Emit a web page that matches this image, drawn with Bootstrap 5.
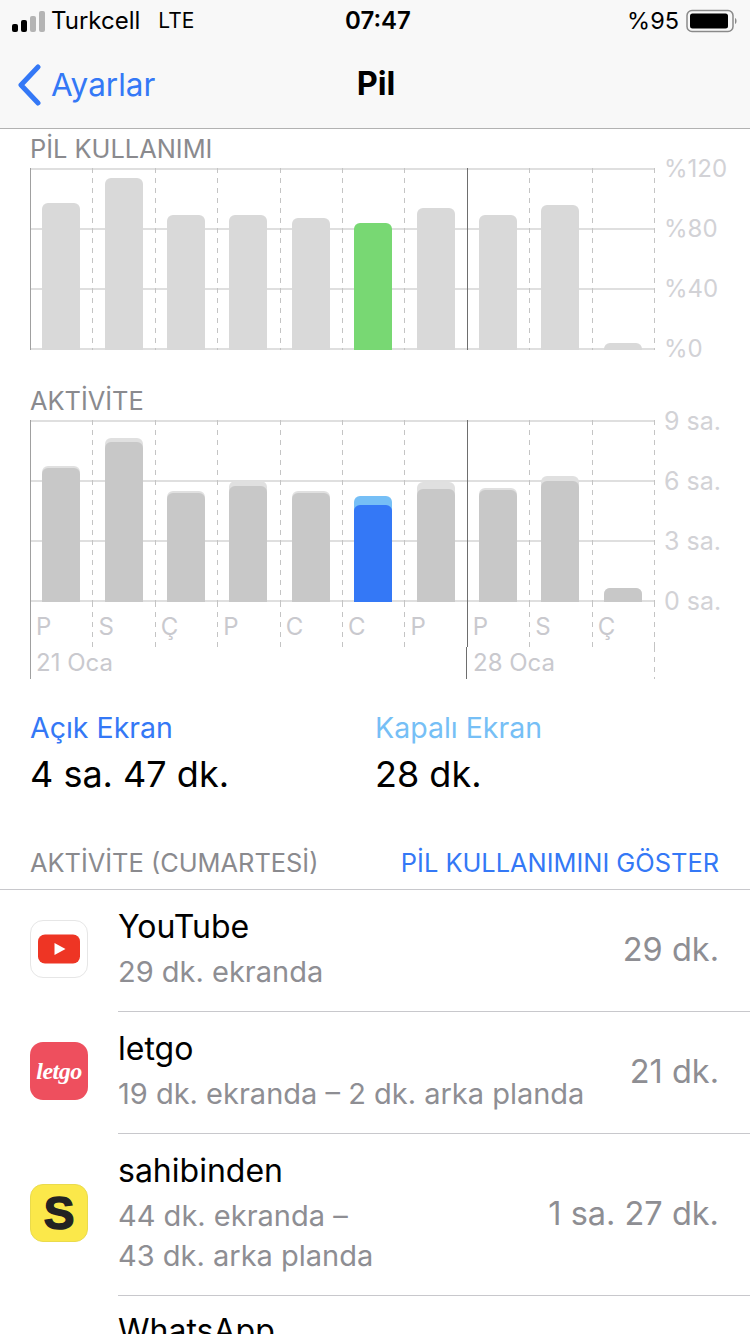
<!DOCTYPE html>
<html lang="tr">
<head>
    <meta charset="UTF-8">
    <meta name="viewport" content="width=device-width, initial-scale=1.0">
    <title>Pil</title>
    <link href="https://cdn.jsdelivr.net/npm/bootstrap@5.3.0/dist/css/bootstrap.min.css" rel="stylesheet">
    <style>
        html, body { height: 1334px; overflow: hidden; background: #fff; }
        body { font-family: Inter, "Liberation Sans", sans-serif; color: #000; }
        .screen { width: 750px; height: 1334px; overflow: hidden; }

        .top-area { height: 129px; background: #f8f8f8; border-bottom: 1px solid #b2b2b2; }
        .status-row { height: 42px; padding: 0 12px; font-size: 24px; }
        .signal { gap: 3px; height: 22px; margin-right: 6px; }
        .signal span { width: 6px; border-radius: 2px; background: #b4b4b4; }
        .signal .on { background: #000; }
        .status-net { font-size: 21px; margin-left: 18px; }
        .status-time { left: 0; right: 0; top: 0; line-height: 42px; font-weight: 600; padding-left: 6px; }
        .status-pct { font-size: 23.500px; margin-right: 7px; }
        .title-row { height: 86px; }
        .back-link { color: #3478f6; left: 17px; top: 20px; gap: 10px; line-height: 46px; font-size: 31.500px; }
        .page-title { font-weight: 700; font-size: 32.500px; padding-left: 2px; padding-bottom: 1px; }

        .section-label { font-size: 25.400px; color: #8a8a8e; padding: 5px 0 4px 30px; line-height: 30px; }
        .section-label.second { margin-top: 31px; }
        .chart-wrap { padding-left: 30px; }
        .plot { width: 625px; height: 182px; background-image: repeating-linear-gradient(to bottom, #dfdfdf 0, #dfdfdf 2px, transparent 2px, transparent 60px); border-left: 1px solid #a0a0a0; }
        .day-col { flex: 1 1 0; padding-right: 1px; background: repeating-linear-gradient(to bottom, #c4c4c4 0, #c4c4c4 5px, transparent 5px, transparent 10px) right top / 1px 100% no-repeat; }
        .day-col.week-end { background: linear-gradient(#6e6e6e, #6e6e6e) right top / 1px 100% no-repeat; }
        .bar-slot { height: 100%; padding-right: 1px; }
        .bar-light, .bar-dark { width: 38px; border-radius: 6px 6px 0 0; }
        .bar-light { background: #d9d9d9; }
        .bar-dark { background: #c8c8c8; }
        .tint-light { background: #e0e0e0; }
        .green { background: #78d873; }
        .blue-light { background: #76bff6; }
        .blue-dark { background: #3478f6; }
        .axis { margin: -29px 0 -29px 9px; font-size: 25px; color: #d2d2d6; }
        .axis.pct { font-size: 24px; margin-left: 9px; }
        .axis div { height: 60px; line-height: 60px; white-space: nowrap; }
        .day-row { width: 625px; height: 45px; font-size: 24px; color: #c9c9ce; border-left: 1px solid #a0a0a0; }
        .day-row .day-col { padding-left: 5px; line-height: 50px; }
        .date-row { width: 625px; height: 32px; font-size: 24px; color: #c9c9ce; border-left: 1px solid #a0a0a0; line-height: 32px; }
        .date-a { width: 436px; padding-left: 5px; border-right: 1px solid #6e6e6e; }
        .date-b { flex: 1; padding-left: 6px; background: repeating-linear-gradient(to bottom, #c4c4c4 0, #c4c4c4 5px, transparent 5px, transparent 10px) right top / 1px 100% no-repeat; }

        .stats { padding: 28px 0 0 30px; }
        .stat-cell { width: 345px; }
        .stat-name { font-size: 28.500px; line-height: 42px; }
        .stat-value { font-size: 36px; line-height: 50px; }
        .c-blue { color: #3478f6; }
        .c-sky { color: #76bff6; }

        .list-head { margin-top: 44px; padding: 0 31px 0 30px; height: 47px; font-size: 25.400px; color: #8a8a8e; line-height: 40px; border-bottom: 1px solid #c8c8cc; }
        .app-row { padding-left: 30px; }
        .app-icon { width: 58px; height: 58px; border-radius: 13px; flex: none; margin: -4px 30px 0 0; }
        .app-body { flex: 1; padding-right: 31px; border-bottom: 1px solid #c8c8cc; }
        .app-text { align-self: flex-start; padding-top: 18px; }
        .app-name { font-size: 32px; line-height: 38px; margin-bottom: 6px; }
        .app-sub { font-size: 29px; line-height: 40px; color: #8e8e93; }
        .app-time { font-size: 32.500px; color: #8e8e93; white-space: nowrap; }
        .ic-yt { background: #fff; border: 1px solid #e6e6e6; }
        .ic-letgo { background: #ee4f5e; color: #fff; font-family: "Liberation Serif", serif; font-style: italic; font-weight: 700; font-size: 24px; letter-spacing: -0.5px; }
        .ic-sahi { background: #fbe84a; border: 1px solid #eadb4c; color: #222; font-family: "Liberation Sans", sans-serif; font-weight: 700; font-size: 46px; -webkit-text-stroke: 1.5px #222; }
    </style>
</head>
<body>
    <div class="screen">
        <!-- Status bar and title -->
        <div class="top-area">
            <div class="status-row d-flex align-items-center position-relative">
                <div class="signal d-flex align-items-end">
                    <span class="on" style="height: 8px"></span>
                    <span class="on" style="height: 12px"></span>
                    <span style="height: 16px"></span>
                    <span style="height: 21px"></span>
                </div>
                <span>Turkcell</span>
                <span class="status-net">LTE</span>
                <div class="status-time position-absolute text-center">07:47</div>
                <span class="status-pct ms-auto">%95</span>
                <svg width="52" height="24" viewBox="0 0 52 24">
                    <rect x="1" y="1.5" width="46" height="21" rx="5" fill="none" stroke="#8a8a8a" stroke-width="1.5"/>
                    <rect x="4" y="4.5" width="38" height="15" rx="2.5" fill="#000"/>
                    <path d="M49 9c2 .5 2 5.500 0 6z" fill="#8a8a8a"/>
                </svg>
            </div>
            <div class="title-row d-flex align-items-center justify-content-center position-relative">
                <div class="back-link d-flex align-items-center position-absolute">
                    <svg width="24" height="42" viewBox="0 0 24 42"><path d="M21 3 4 21l17 18" fill="none" stroke="#3478f6" stroke-width="5" stroke-linecap="round" stroke-linejoin="round"/></svg>
                    <span>Ayarlar</span>
                </div>
                <div class="page-title">Pil</div>
            </div>
        </div>

        <div class="section-label">PİL KULLANIMI</div>
        <div class="chart-wrap d-flex">
            <div class="plot d-flex" id="usagePlot"></div>
            <div class="axis pct"><div>%120</div><div>%80</div><div>%40</div><div>%0</div></div>
        </div>

        <div class="section-label second">AKTİVİTE</div>
        <div class="chart-wrap d-flex">
            <div>
                <div class="plot d-flex" id="activityPlot"></div>
                <div class="day-row d-flex" id="dayRow"></div>
                <div class="date-row d-flex">
                    <div class="date-a">21 Oca</div>
                    <div class="date-b">28 Oca</div>
                </div>
            </div>
            <div class="axis align-self-start"><div>9 sa.</div><div>6 sa.</div><div>3 sa.</div><div>0 sa.</div></div>
        </div>

        <div class="stats d-flex">
            <div class="stat-cell">
                <div class="stat-name c-blue">Açık Ekran</div>
                <div class="stat-value">4 sa. 47 dk.</div>
            </div>
            <div class="stat-cell">
                <div class="stat-name c-sky">Kapalı Ekran</div>
                <div class="stat-value">28 dk.</div>
            </div>
        </div>

        <div class="list-head d-flex justify-content-between">
            <span>AKTİVİTE (CUMARTESİ)</span>
            <span class="c-blue">PİL KULLANIMINI GÖSTER</span>
        </div>

        <!-- App list -->
        <div class="app-row d-flex align-items-center">
            <div class="app-icon ic-yt d-flex align-items-center justify-content-center">
                <svg width="42" height="30" viewBox="0 0 42 30"><rect width="42" height="29" y=".5" rx="7" fill="#ee3524"/><path d="M16.500 9l11 6-11 6z" fill="#fff"/></svg>
            </div>
            <div class="app-body d-flex align-items-center justify-content-between" style="height: 122px">
                <div class="app-text"><div class="app-name">YouTube</div><div class="app-sub">29 dk. ekranda</div></div>
                <div class="app-time">29 dk.</div>
            </div>
        </div>
        <div class="app-row d-flex align-items-center">
            <div class="app-icon ic-letgo d-flex align-items-center justify-content-center">letgo</div>
            <div class="app-body d-flex align-items-center justify-content-between" style="height: 122px">
                <div class="app-text"><div class="app-name">letgo</div><div class="app-sub">19 dk. ekranda – 2 dk. arka planda</div></div>
                <div class="app-time">21 dk.</div>
            </div>
        </div>
        <div class="app-row d-flex align-items-center">
            <div class="app-icon ic-sahi d-flex align-items-center justify-content-center">S</div>
            <div class="app-body d-flex align-items-center justify-content-between" style="height: 162px">
                <div class="app-text"><div class="app-name">sahibinden</div><div class="app-sub">44 dk. ekranda –<br>43 dk. arka planda</div></div>
                <div class="app-time">1 sa. 27 dk.</div>
            </div>
        </div>
        <div class="app-row d-flex">
            <div class="app-icon invisible"></div>
            <div class="app-body border-0 pt-3"><div class="app-name">WhatsApp</div></div>
        </div>
    </div>

    <script src="https://cdn.jsdelivr.net/npm/bootstrap@5.3.0/dist/js/bootstrap.bundle.min.js"></script>
    <script>
        // heights in px above the baseline, read off the two charts
        const usage = [147, 172, 135, 135, 132, 127, 142, 135, 145, 7];
        const total = [136, 164, 111, 121, 111, 106, 120, 114, 126, 14];
        const screenOn = [134, 160, 109, 116, 109, 97, 113, 112, 121, 14];
        const days = ["P", "S", "Ç", "P", "C", "C", "P", "P", "S", "Ç"];
        const todayIdx = 5;

        function colClass(i) {
            return i === 6 ? "day-col week-end" : "day-col";
        }

        document.getElementById("usagePlot").innerHTML = usage.map((h, i) => `
            <div class="${colClass(i)}">
                <div class="bar-slot d-flex align-items-end justify-content-center">
                    <div class="bar-light ${i === todayIdx ? "green" : ""}" style="height: ${h}px"></div>
                </div>
            </div>`).join("");

        document.getElementById("activityPlot").innerHTML = total.map((h, i) => `
            <div class="${colClass(i)}">
                <div class="bar-slot d-flex align-items-end justify-content-center">
                    <div class="bar-light d-flex align-items-end ${i === todayIdx ? "blue-light" : "tint-light"}" style="height: ${h}px">
                        <div class="bar-dark w-100 ${i === todayIdx ? "blue-dark" : ""}" style="height: ${screenOn[i]}px"></div>
                    </div>
                </div>
            </div>`).join("");

        document.getElementById("dayRow").innerHTML = days.map((d, i) =>
            `<div class="${colClass(i)}">${d}</div>`).join("");
    </script>
</body>
</html>
